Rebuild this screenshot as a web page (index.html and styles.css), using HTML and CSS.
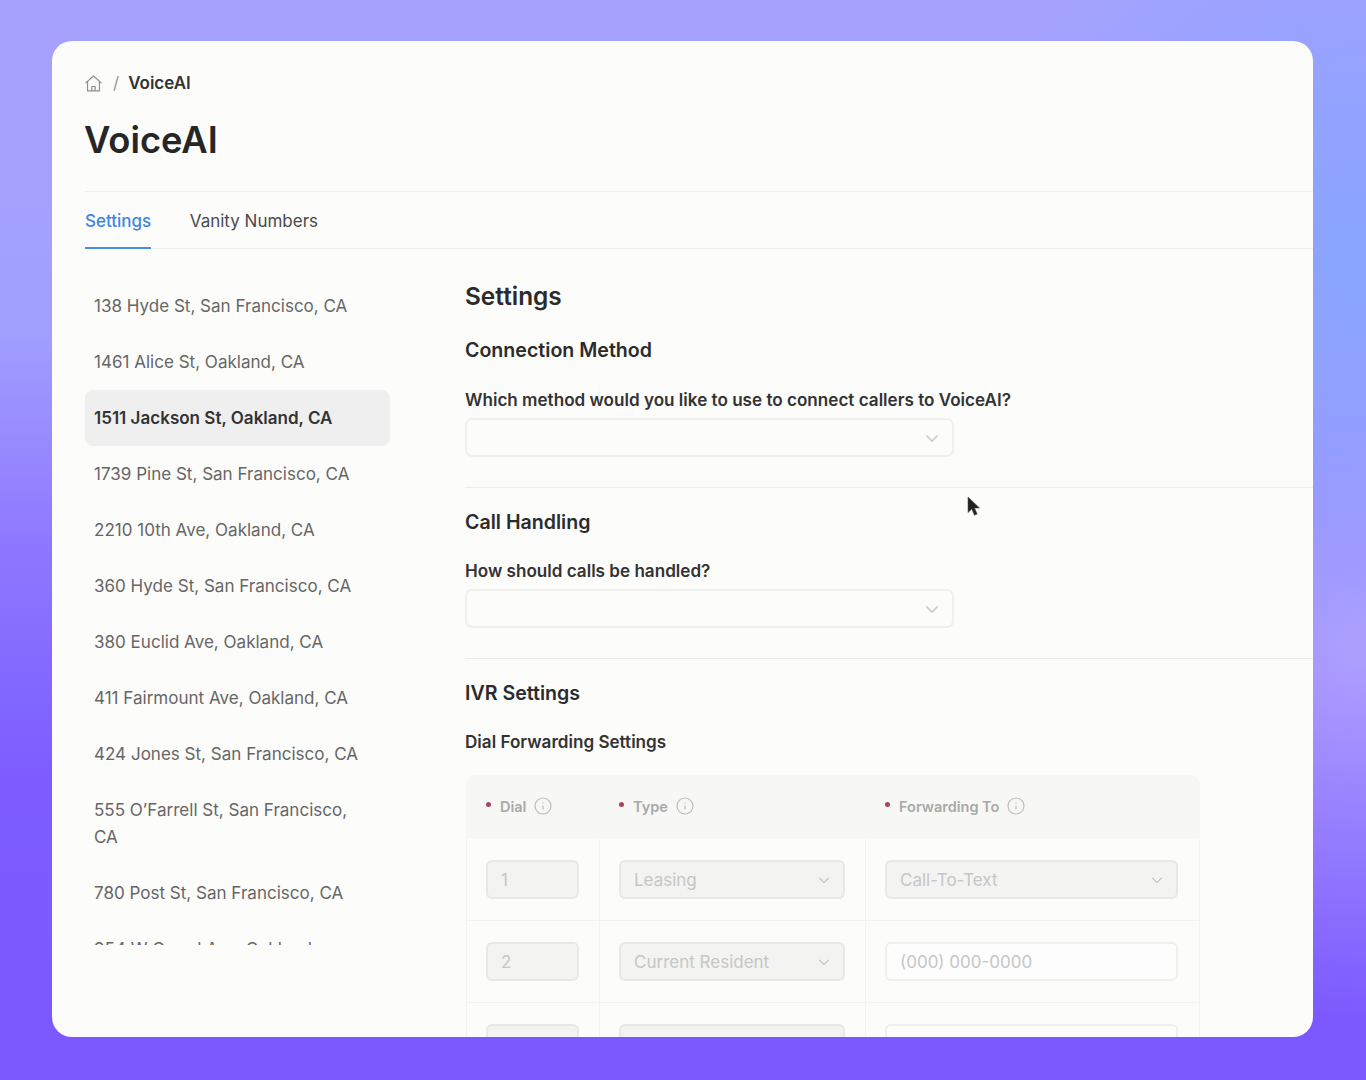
FILE: index.html
```html
<!DOCTYPE html>
<html lang="en">
<head>
  <meta charset="UTF-8">
  <meta name="viewport" content="width=device-width, initial-scale=1.0">
  <title>VoiceAI</title>
  <link rel="stylesheet" href="styles.css">
</head>
<body>
  <div class="card">
    <div class="breadcrumb">
      <svg class="home-icon" viewBox="1 1 16 16" fill="none" stroke="#8d8d8d" stroke-width="1.1" stroke-linejoin="round">
        <path d="M1.500 8.600 9 2l7.500 6.600"/>
        <path d="M3.400 7.200V16h11.200V7.200"/>
        <path d="M7.400 16v-4.200h3.200V16"/>
      </svg>
      <span class="crumb-sep">/</span>
      <span class="crumb-current">VoiceAI</span>
    </div>
    <h1 class="page-title">VoiceAI</h1>

    <div class="tabs">
      <a class="tab active">Settings</a>
      <a class="tab">Vanity Numbers</a>
    </div>

    <div class="main">
      <ul class="property-list">
        <li>138 Hyde St, San Francisco, CA</li>
        <li>1461 Alice St, Oakland, CA</li>
        <li class="selected">1511 Jackson St, Oakland, CA</li>
        <li>1739 Pine St, San Francisco, CA</li>
        <li>2210 10th Ave, Oakland, CA</li>
        <li>360 Hyde St, San Francisco, CA</li>
        <li>380 Euclid Ave, Oakland, CA</li>
        <li>411 Fairmount Ave, Oakland, CA</li>
        <li>424 Jones St, San Francisco, CA</li>
        <li>555 O’Farrell St, San Francisco, CA</li>
        <li>780 Post St, San Francisco, CA</li>
        <li>954 W Grand Ave, Oakland</li>
      </ul>

      <div class="settings">
        <h2>Settings</h2>

        <section class="block">
          <h3>Connection Method</h3>
          <label class="field-label">Which method would you like to use to connect callers to VoiceAI?</label>
          <div class="select-box">
            <svg class="chevron" viewBox="0 0 14 14" fill="none" stroke="#c9c9c9" stroke-width="1.6"><path d="M1.500 4.500 7 10l5.500-5.500"/></svg>
          </div>
        </section>

        <section class="block">
          <h3>Call Handling</h3>
          <label class="field-label">How should calls be handled?</label>
          <div class="select-box">
            <svg class="chevron" viewBox="0 0 14 14" fill="none" stroke="#c9c9c9" stroke-width="1.6"><path d="M1.500 4.500 7 10l5.500-5.500"/></svg>
          </div>
        </section>

        <section class="ivr">
          <h3>IVR Settings</h3>
          <label class="field-label">Dial Forwarding Settings</label>

          <div class="dial-table">
            <div class="dial-head">
              <div class="head-cell"><i class="req"></i>Dial
                <svg class="info" viewBox="0 0 18 18" fill="none" stroke="#bdbdbd" stroke-width="1.200"><circle cx="9" cy="9" r="8"/><path d="M9 8.500v4M9 5.500v1"/></svg>
              </div>
              <div class="head-cell"><i class="req"></i>Type
                <svg class="info" viewBox="0 0 18 18" fill="none" stroke="#bdbdbd" stroke-width="1.200"><circle cx="9" cy="9" r="8"/><path d="M9 8.500v4M9 5.500v1"/></svg>
              </div>
              <div class="head-cell"><i class="req"></i>Forwarding To
                <svg class="info" viewBox="0 0 18 18" fill="none" stroke="#bdbdbd" stroke-width="1.200"><circle cx="9" cy="9" r="8"/><path d="M9 8.500v4M9 5.500v1"/></svg>
              </div>
            </div>

            <div class="dial-row">
              <div class="cell"><div class="input disabled">1</div></div>
              <div class="cell"><div class="input disabled">Leasing
                <svg class="chevron" viewBox="0 0 14 14" fill="none" stroke="#bdbdbd" stroke-width="1.300"><path d="M1.500 4.500 7 10l5.500-5.500"/></svg>
              </div></div>
              <div class="cell"><div class="input disabled">Call-To-Text
                <svg class="chevron" viewBox="0 0 14 14" fill="none" stroke="#bdbdbd" stroke-width="1.300"><path d="M1.500 4.500 7 10l5.500-5.500"/></svg>
              </div></div>
            </div>

            <div class="dial-row">
              <div class="cell"><div class="input disabled">2</div></div>
              <div class="cell"><div class="input disabled">Current Resident
                <svg class="chevron" viewBox="0 0 14 14" fill="none" stroke="#bdbdbd" stroke-width="1.300"><path d="M1.500 4.500 7 10l5.500-5.500"/></svg>
              </div></div>
              <div class="cell"><div class="input">(000) 000-0000</div></div>
            </div>

            <div class="dial-row">
              <div class="cell"><div class="input disabled"></div></div>
              <div class="cell"><div class="input disabled"></div></div>
              <div class="cell"><div class="input"></div></div>
            </div>
          </div>
        </section>
      </div>
    </div>

    <!-- mouse pointer on top of the page -->
    <svg class="cursor" viewBox="0 0 14 22">
      <path d="M1 1v15.500l3.800-3.500 2.600 6.200 2.800-1.200-2.700-6h5z" fill="#222" stroke="#555" stroke-width="0.600"/>
    </svg>
  </div>
</body>
</html>
```

FILE: styles.css
```css
* {
  box-sizing: border-box;
}
body {
  margin: 0;
  height: 1080px;
  padding: 41px 53px 43px 52px;
  overflow: hidden;
  font-family: Inter, "Liberation Sans", sans-serif;
  color: #2b2b2b;
  background:
    radial-gradient(420px 420px at 1366px 260px, #88a4ff 0%, rgba(136, 164, 255, 0) 100%),
    radial-gradient(420px 380px at 1366px 640px, #b0a0ff 0%, rgba(176, 160, 255, 0) 100%),
    linear-gradient(180deg, #a7a1ff 0%, #a1a0ff 30%, #8f78ff 50%, #7d5cff 72%, #7b58ff 100%);
}
.card {
  position: relative;
  height: 996px;
  padding: 0 0 0 33px;
  overflow: hidden;
  border-radius: 20px;
  background-color: #fcfcfb;
}

/* Header */
.breadcrumb {
  display: flex;
  align-items: center;
  height: 20px;
  margin-top: 32px;
  font-size: 17px;
}
.home-icon {
  width: 17px;
  height: 17px;
  margin-right: 11px;
}
.crumb-sep {
  margin-right: 9px;
  color: #999;
}
.crumb-current {
  font-weight: 600;
  color: #333;
}
.page-title {
  margin: 25px 0 0 -1px;
  height: 44px;
  font-size: 36.300px;
  line-height: 44px;
  font-weight: 600;
  color: #262626;
}

/* Tabs */
.tabs {
  display: flex;
  gap: 38.500px;
  height: 58px;
  margin-top: 29px;
  border-top: 1px solid #f0f0ef;
  border-bottom: 1px solid #eeeeed;
}
.tab {
  padding-top: 18px;
  font-size: 17px;
  line-height: 22px;
  color: #4a4a4a;
}
.tab.active {
  color: #3f86e4;
  font-weight: 500;
  border-bottom: 2px solid #4a8de6;
  margin-bottom: -1px;
}

.main {
  display: flex;
  gap: 75px;
  margin-top: 29px;
}

/* Property list */
.property-list {
  flex: 0 0 305px;
  height: 667px;
  margin: 0;
  padding: 0;
  overflow: hidden;
  list-style: none;
}
.property-list li {
  padding: 14px 30px 15px 9px;
  font-size: 17.050px;
  line-height: 27px;
  color: #666;
  border-radius: 8px;
}
.property-list li.selected {
  background-color: #efefef;
  font-weight: 600;
  color: #333;
}

/* Settings column */
.settings {
  flex: 1;
  min-width: 0;
}
.settings h2 {
  margin: 0;
  height: 36px;
  font-size: 24.400px;
  line-height: 36px;
  font-weight: 600;
}
.settings h3 {
  margin: 0;
  font-size: 19.600px;
  line-height: 28px;
  font-weight: 600;
}
.block {
  height: 174px;
  padding-top: 22px;
  border-bottom: 1px solid #ececeb;
}
.block + .block {
  height: 171px;
  padding-top: 20px;
}
.block + .block .field-label {
  margin-top: 24px;
}
.field-label {
  display: block;
  margin-top: 25px;
  font-size: 17.100px;
  line-height: 22px;
  font-weight: 600;
  color: #333;
}
.select-box {
  display: flex;
  align-items: center;
  justify-content: flex-end;
  width: 489px;
  height: 39px;
  margin-top: 7px;
  padding-right: 13px;
  border: 2px solid #efefee;
  border-radius: 7px;
}
.chevron {
  width: 14px;
  height: 14px;
}

/* IVR table */
.ivr {
  padding-top: 20px;
}
.ivr .field-label {
  margin-top: 24px;
}
.dial-table {
  width: 734px;
  margin: 22px 0 0 1px;
}
.dial-head {
  display: grid;
  grid-template-columns: 133px 266px 335px;
  height: 64px;
  padding-bottom: 2px;
  border-radius: 10px 10px 0 0;
  background-color: #f7f7f6;
}
.head-cell {
  display: flex;
  align-items: center;
  padding-left: 20px;
  font-size: 14.500px;
  font-weight: 600;
  color: #a9a9a9;
}
.req {
  width: 5px;
  height: 5px;
  margin-right: 9px;
  margin-bottom: 4px;
  border-radius: 50%;
  background-color: #a5465e;
}
.info {
  width: 18px;
  height: 18px;
  margin-left: 8px;
}
.dial-row {
  display: grid;
  grid-template-columns: 133px 266px 335px;
  height: 82px;
  border-bottom: 1px solid #f3f3f2;
}
.cell {
  display: flex;
  align-items: center;
  padding: 0 20px 0 19px;
  border-left: 1px solid #f3f3f2;
}
.cell:last-child {
  padding-right: 21px;
  border-right: 1px solid #f3f3f2;
}
.input {
  display: flex;
  align-items: center;
  justify-content: space-between;
  width: 100%;
  height: 39px;
  padding: 0 13px;
  border: 2px solid #efefee;
  border-radius: 6px;
  font-size: 17px;
  color: #c6c6c6;
  background-color: #fdfdfd;
}
.input.disabled {
  border-color: #e8e8e7;
  background-color: #f3f3f2;
}
.input .chevron {
  width: 12px;
  height: 12px;
}

/* Mouse pointer */
.cursor {
  position: absolute;
  left: 915px;
  top: 455px;
  width: 14px;
  height: 22px;
}
```
